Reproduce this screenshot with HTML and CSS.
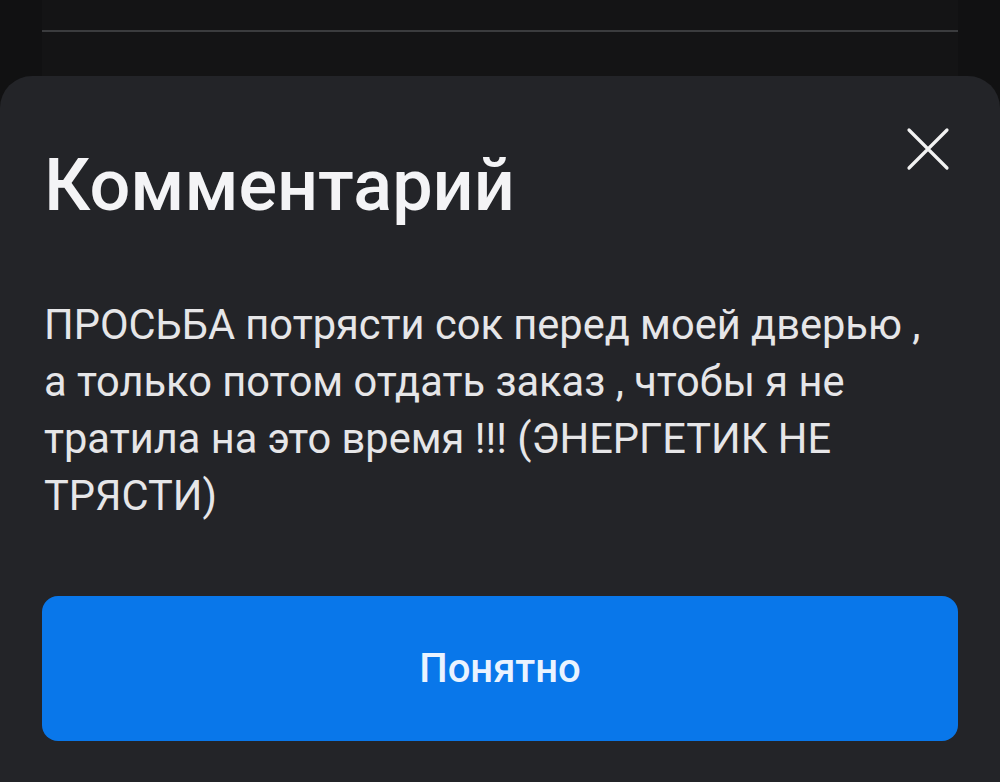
FILE: index.html
```html
<!DOCTYPE html>
<html lang="ru">
<head>
<meta charset="utf-8">
<link rel="stylesheet" href="styles.css">
</head>
<body>
<div class="backdrop">
  <div class="under-card"><div class="divider"></div></div>
</div>
<div class="sheet">
  <div class="sheet-head">
    <h1 class="title">Комментарий</h1>
    <button class="close" aria-label="Закрыть">
      <svg width="44" height="44" viewBox="0 0 44 44"><path d="M3 3L41 41M41 3L3 41" stroke="#f2f2f2" stroke-width="3.2" stroke-linecap="round"/></svg>
    </button>
  </div>
  <p class="comment">ПРОСЬБА потрясти сок перед моей дверью , а только потом отдать заказ , чтобы я не тратила на это время !!! (ЭНЕРГЕТИК НЕ ТРЯСТИ)</p>
  <button class="ok">Понятно</button>
</div>
</body>
</html>
```
FILE: styles.css
```css
* { box-sizing: border-box; }
html, body { margin: 0; padding: 0; }
body {
  width: 1000px;
  height: 782px;
  background: #111112;
  font-family: Roboto, "Noto Sans", sans-serif;
  overflow: hidden;
}
.backdrop {
  height: 76px;
  padding: 0 42px;
}
.under-card {
  height: 76px;
  background: #141415;
  padding-top: 30px;
}
.divider {
  height: 2px;
  background: #3b3c3e;
}
.sheet {
  background: #232428;
  border-radius: 32px 32px 0 0;
  height: 706px;
  padding: 0 42px;
  display: flex;
  flex-direction: column;
}
.sheet-head {
  display: flex;
  justify-content: space-between;
  align-items: flex-start;
}
.title {
  margin: 70px 0 0 2px;
  font-size: 72px;
  font-weight: 500;
  color: #f4f4f6;
  line-height: 80px;
  letter-spacing: 0;
}
.close {
  margin: 51px 8px 0 0;
  width: 44px;
  height: 44px;
  padding: 0;
  border: 0;
  background: none;
}
.close svg { display: block; }
.comment {
  margin: 70px 0 0 2px;
  font-size: 41.6px;
  line-height: 57px;
  color: #e6e6e8;
  font-weight: 400;
  max-width: 895px;
}
.ok {
  margin-top: 72px;
  height: 145px;
  border: 0;
  border-radius: 16px;
  background: #0977ea;
  color: #eaf3ff;
  font-family: Roboto, "Noto Sans", sans-serif;
  font-size: 40px;
  font-weight: 500;
}
```
